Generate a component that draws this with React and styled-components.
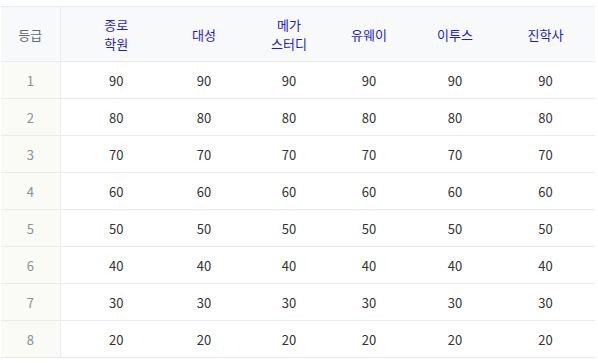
import React from "react";
import styled, { createGlobalStyle } from "styled-components";

const Global = createGlobalStyle`
  html, body { margin: 0; padding: 0; background: #fff; }
  body { font-family: "Noto Sans CJK KR", "Noto Sans", sans-serif; }
`;

const Table = styled.table`
  margin: 6px 0 0 1px;
  width: 594px;
  border-collapse: collapse;
  table-layout: fixed;
  font-size: 13px;
  border-top: 1px solid #e9ebf0;
`;

const HeadCell = styled.th`
  height: 54px;
  padding: 0 ${(p) => (p.$last ? "18px" : "0")} 0 0;
  background: #f8f9fb;
  font-weight: 400;
  line-height: 19px;
  text-align: center;
  color: ${(p) => (p.$grade ? "#666a70" : "#1d1ad0")};
  border-bottom: 1px solid #e9ebf0;
  border-right: ${(p) => (p.$grade ? "1px solid #eceef1" : "none")};
`;

const Cell = styled.td`
  height: 36px;
  padding: 0 ${(p) => (p.$last ? "18px" : "0")} 0 0;
  text-align: center;
  color: ${(p) => (p.$grade ? "#8c8f95" : "#333")};
  background: ${(p) => (p.$grade ? "#fafaf6" : "#fff")};
  border-bottom: 1px solid #e9ebf0;
  border-right: ${(p) => (p.$grade ? "1px solid #eceef1" : "none")};
`;

const widths = [59, 112, 64, 106, 54, 118, 81];
const names = [["종로", "학원"], ["대성"], ["메가", "스터디"], ["유웨이"], ["이투스"], ["진학사"]];
const rows = [90, 80, 70, 60, 50, 40, 30, 20];

export default function App() {
  return (
    <>
      <Global />
      <Table>
        <colgroup>
          {widths.map((w, i) => (
            <col key={i} style={{ width: w }} />
          ))}
        </colgroup>
        <thead>
          <tr>
            <HeadCell $grade>등급</HeadCell>
            {names.map((n, i) => (
              <HeadCell key={i} $last={i === names.length - 1}>
                {n.map((part, j) => (
                  <React.Fragment key={j}>
                    {j > 0 && <br />}
                    {part}
                  </React.Fragment>
                ))}
              </HeadCell>
            ))}
          </tr>
        </thead>
        <tbody>
          {rows.map((v, r) => (
            <tr key={r}>
              <Cell $grade>{r + 1}</Cell>
              {names.map((_, i) => (
                <Cell key={i} $last={i === names.length - 1}>
                  {v}
                </Cell>
              ))}
            </tr>
          ))}
        </tbody>
      </Table>
    </>
  );
}
